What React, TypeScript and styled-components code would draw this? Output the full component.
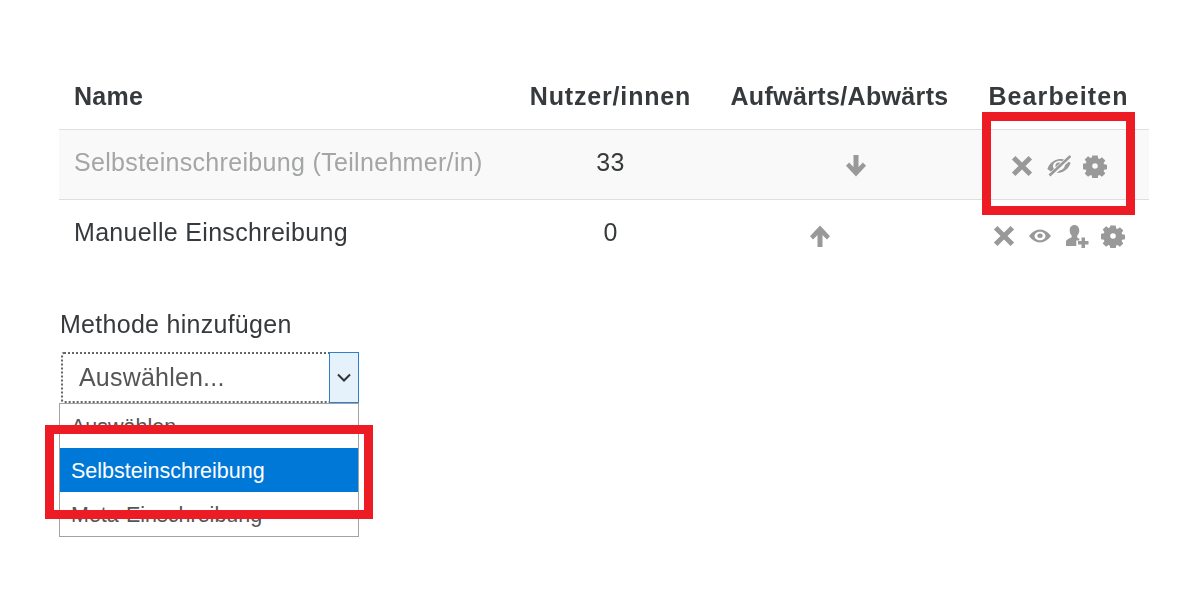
import React from "react";
import styled, { createGlobalStyle } from "styled-components";

const Global = createGlobalStyle`
  html, body { margin: 0; padding: 0; background: #fff; }
  body { font-family: "Liberation Sans", Arial, sans-serif; color: #373a3c; overflow: hidden; }
`;

const Page = styled.div`
  position: relative;
  width: 1200px;
  height: 591px;
  padding: 59px 51px 0 59px;
  box-sizing: border-box;
`;

const Content = styled.div`
  filter: blur(0.7px);
`;

const Row = styled.div<{ $muted?: boolean; $head?: boolean }>`
  display: grid;
  grid-template-columns: 451px 201px 257px 181px;
  height: ${(p) => (p.$head ? 70 : 69)}px;
  background: ${(p) => (p.$muted ? "#f9f9f9" : "transparent")};
  border-top: ${(p) => (p.$head ? "0" : "1px solid #dfdfdf")};
`;

const HeadCell = styled.div<{ $left?: boolean; $track: number }>`
  display: flex;
  align-items: center;
  justify-content: ${(p) => (p.$left ? "flex-start" : "center")};
  padding: 4px 0 0 ${(p) => (p.$left ? 15 : 0)}px;
  font-size: 25px;
  font-weight: 700;
  letter-spacing: ${(p) => p.$track}px;
  white-space: nowrap;
`;

const Cell = styled.div<{ $left?: boolean; $muted?: boolean }>`
  display: flex;
  align-items: center;
  justify-content: ${(p) => (p.$left ? "flex-start" : "center")};
  padding: 0 0 4px ${(p) => (p.$left ? 15 : 0)}px;
  font-size: 25px;
  letter-spacing: 0.32px;
  color: ${(p) => (p.$muted ? "#a3a5a6" : "#373a3c")};
  white-space: nowrap;
`;

const IconRow = styled.div`
  display: flex;
  align-items: center;
  gap: 12.5px;
  padding-top: 6px;
  color: #999;
`;

const ArrowRow = styled(IconRow)`
  margin-right: 3px;
`;

const Spacer = styled.span`
  width: 24px;
  height: 24px;
`;

const Icon = styled.svg`
  display: block;
  width: 24px;
  height: 24px;
  fill: currentColor;
`;

const AddMethod = styled.div`
  position: relative;
  margin-top: 40px;
  width: 301px;
`;

const Label = styled.div`
  font-size: 25px;
  line-height: 30px;
  letter-spacing: 0.28px;
  margin-left: 1px;
`;

const Select = styled.div`
  display: flex;
  align-items: stretch;
  justify-content: space-between;
  height: 51px;
  margin: 13px 0 0 2px;
  width: 298px;
  box-sizing: border-box;
  border: 2px dotted #666;
  border-radius: 3px;
`;

const SelectValue = styled.span`
  display: flex;
  align-items: center;
  padding-left: 16px;
  font-size: 25px;
  letter-spacing: 0.2px;
  color: #555;
`;

const SelectArrow = styled.span`
  display: flex;
  align-items: center;
  justify-content: center;
  width: 28px;
  background: #e5f1fb;
  border: 1.5px solid #2f7fc9;
  color: #333;
  margin: -2px -2px -2px 0;
`;

const Menu = styled.div`
  position: absolute;
  left: 0;
  top: 94px;
  width: 300px;
  box-sizing: border-box;
  height: 134px;
  border: 1px solid #a3a3a3;
  background: #fff;
`;

const MenuItem = styled.div<{ $active?: boolean }>`
  display: flex;
  align-items: center;
  height: 44px;
  box-sizing: border-box;
  padding: 2px 0 0 11px;
  font-size: 21.5px;
  color: ${(p) => (p.$active ? "#fff" : "#555")};
  background: ${(p) => (p.$active ? "#0078d7" : "transparent")};
`;

const Highlight = styled.div`
  position: absolute;
  box-sizing: border-box;
  border: 9px solid #ed1c24;
  filter: blur(0.4px);
`;

const Close = () => (
  <Icon viewBox="0 0 24 24">
    <path d="M5.4 1.900 12 8.500l6.600-6.600 3.500 3.500-6.600 6.600 6.600 6.600-3.500 3.500-6.600-6.600-6.600 6.600-3.500-3.500L8.500 12 1.900 5.400z" />
  </Icon>
);

const Eye = () => (
  <Icon viewBox="0 0 24 24">
    <path
      fillRule="evenodd"
      d="M1 12c3-4.200 6.800-6.500 11-6.500S20 7.800 23 12c-3 4.200-6.800 6.500-11 6.500S4 16.200 1 12zm5.500 0c0 2.400 2.400 4.300 5.500 4.300s5.500-1.900 5.500-4.300-2.400-4.300-5.500-4.300S6.500 9.600 6.500 12zm2.800-.3c0-1.300 1.200-2.200 2.700-2.200s2.700.9 2.700 2.200-1.200 2.300-2.700 2.300-2.700-1-2.700-2.300z"
    />
  </Icon>
);

const EyeOff = () => (
  <Icon viewBox="0 0 24 24">
    <g transform="rotate(-14 12 12)">
      <path
        fillRule="evenodd"
        d="M0 12c3-4.400 7.300-6.800 12-6.800S21 7.600 24 12c-3 4.400-7.300 6.800-12 6.800S3 16.400 0 12zm6-.4c0 2.700 2.700 4.800 6 4.800s6-2.100 6-4.800-2.700-4.800-6-4.800-6 2.100-6 4.800z"
      />
      <path d="M12 8.500c-2 0-3.500 1.400-3.500 3.200s1.500 3.200 3.500 3.200 3.500-1.400 3.500-3.200-1.500-3.200-3.500-3.200z" />
    </g>
    <path d="M24 2 3 22" stroke="#f9f9f9" strokeWidth="5" />
    <path d="M23.500 2 2.500 21.500" stroke="currentColor" strokeWidth="2.600" />
  </Icon>
);

const UserPlus = () => (
  <Icon viewBox="0 0 24 24">
    <path d="M9.500 1c3 0 4.800 2.400 4.800 5.400 0 2-.8 3.800-2 4.900v2.400c.8.300 1.400.5 2 .8v2h-3v5.500H1v-4c0-2.300 3-3.600 5.600-4.400v-2.300C5.400 10.200 4.700 8.400 4.700 6.400 4.700 3.400 6.500 1 9.500 1z" />
    <path d="M16.500 13.500h3.500V17h3.500v3.500H20V24h-3.500v-3.500H13V17h3.500z" />
  </Icon>
);

const Gear = () => (
  <Icon viewBox="0 0 24 24">
    <path
      fillRule="evenodd"
      d="M9.300 1.500h5.400l.5 2.900 1.300.5 2.400-1.700 3.400 3.400-1.700 2.400.5 1.300 2.900.5v4.400l-2.900.5-.5 1.300 1.700 2.400-3.400 3.400-2.400-1.700-1.300.5-.5 2.900H9.300l-.5-2.900-1.300-.5-2.400 1.700-3.400-3.400 1.700-2.400-.5-1.300-2.900-.5V9.800l2.900-.5.5-1.300-1.700-2.400 3.400-3.400 2.400 1.700 1.300-.5zM12 9.200a2.800 2.800 0 1 0 0 5.600 2.800 2.800 0 0 0 0-5.600z"
    />
  </Icon>
);

const ArrowDown = () => (
  <Icon viewBox="0 0 24 24">
    <path d="M9.500 1h5v12l4.400-4.400 3.100 3.200L12 22.500 2 11.800l3.100-3.200L9.500 13z" />
  </Icon>
);

const ArrowUp = () => (
  <Icon viewBox="0 0 24 24">
    <path d="M9.500 23h5V11l4.400 4.400 3.100-3.200L12 1.500 2 12.200l3.100 3.200L9.500 11z" />
  </Icon>
);

export default function App() {
  return (
    <Page>
      <Global />
      <Content>
        <Row $head>
          <HeadCell $left $track={0.3}>Name</HeadCell>
          <HeadCell $track={0.83}>Nutzer/innen</HeadCell>
          <HeadCell $track={0.35}>Aufwärts/Abwärts</HeadCell>
          <HeadCell $track={1.1}>Bearbeiten</HeadCell>
        </Row>
        <Row $muted>
          <Cell $left $muted>Selbsteinschreibung (Teilnehmer/in)</Cell>
          <Cell>33</Cell>
          <Cell>
            <ArrowRow>
              <Spacer />
              <ArrowDown />
            </ArrowRow>
          </Cell>
          <Cell>
            <IconRow>
              <Close />
              <EyeOff />
              <Gear />
            </IconRow>
          </Cell>
        </Row>
        <Row>
          <Cell $left>Manuelle Einschreibung</Cell>
          <Cell>0</Cell>
          <Cell>
            <ArrowRow>
              <ArrowUp />
              <Spacer />
            </ArrowRow>
          </Cell>
          <Cell>
            <IconRow>
              <Close />
              <Eye />
              <UserPlus />
              <Gear />
            </IconRow>
          </Cell>
        </Row>
        <AddMethod>
          <Label>Methode hinzufügen</Label>
          <Select>
            <SelectValue>Auswählen...</SelectValue>
            <SelectArrow>
              <svg width="16" height="10" viewBox="0 0 16 10" fill="none" stroke="currentColor" strokeWidth="2">
                <path d="M2 1.500 8 7.500l6-6" />
              </svg>
            </SelectArrow>
          </Select>
          <Menu>
            <MenuItem>Auswählen...</MenuItem>
            <MenuItem $active>Selbsteinschreibung</MenuItem>
            <MenuItem>Meta-Einschreibung</MenuItem>
          </Menu>
        </AddMethod>
      </Content>
      <Highlight style={{ left: 982, top: 112, width: 153, height: 103 }} />
      <Highlight style={{ left: 45, top: 425, width: 328, height: 94 }} />
    </Page>
  );
}
